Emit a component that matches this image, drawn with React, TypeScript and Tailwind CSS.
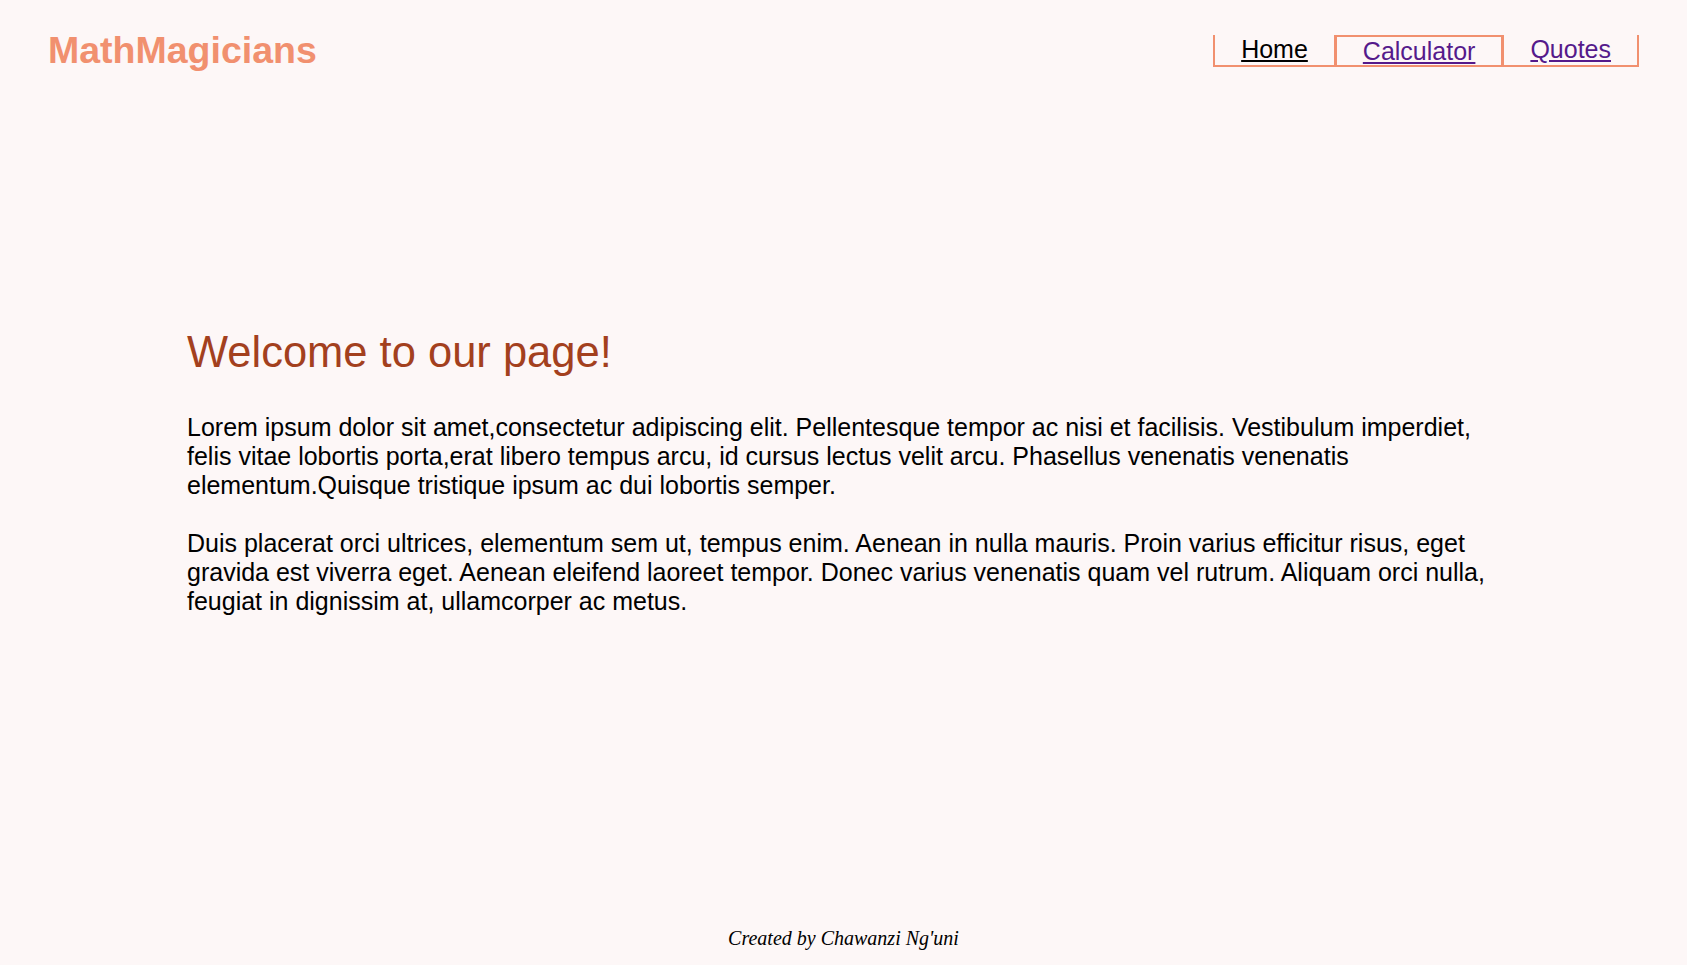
export default function App() {
  return (
    <div className="min-h-screen flex flex-col bg-[#fdf7f7]" style={{ fontFamily: '"Liberation Sans", Arial, sans-serif' }}>
      <header className="flex items-start justify-between pt-[35px] pl-[48px] pr-[48px]">
        <h1 className="text-[37.5px] leading-[30px] font-bold text-[#f1906f]">MathMagicians</h1>
        <nav className="flex text-[25px] leading-[28px]">
          <a href="#" className="px-[26px] border-l-2 border-b-2 border-[#f1906f] text-black underline">Home</a>
          <a href="#" className="px-[26px] border-y-2 border-x-[3px] border-[#f1906f] text-[#551a8b] underline">Calculator</a>
          <a href="#" className="px-[26px] border-r-2 border-b-2 border-[#f1906f] text-[#551a8b] underline">Quotes</a>
        </nav>
      </header>
      <main className="flex-1 px-[187px] mt-[260px]">
        <h2 className="text-[43.5px] leading-[50px] text-[#a3401e]">Welcome to our page!</h2>
        <p className="mt-[36px] text-[25px] leading-[29px] text-black">
          Lorem ipsum dolor sit amet,consectetur adipiscing elit. Pellentesque tempor ac nisi et facilisis. Vestibulum imperdiet, felis vitae lobortis porta,erat libero tempus arcu, id cursus lectus velit arcu. Phasellus venenatis venenatis elementum.Quisque tristique ipsum ac dui lobortis semper.
        </p>
        <p className="mt-[29px] text-[25px] leading-[29px] text-black">
          Duis placerat orci ultrices, elementum sem ut, tempus enim. Aenean in nulla mauris. Proin varius efficitur risus, eget gravida est viverra eget. Aenean eleifend laoreet tempor. Donec varius venenatis quam vel rutrum. Aliquam orci nulla, feugiat in dignissim at, ullamcorper ac metus.
        </p>
      </main>
      <footer className="pb-[15px] text-center">
        <p className="italic text-[20px] leading-[23px] text-black" style={{ fontFamily: '"Liberation Serif", "Times New Roman", serif' }}>
          Created by Chawanzi Ng'uni
        </p>
      </footer>
    </div>
  );
}
